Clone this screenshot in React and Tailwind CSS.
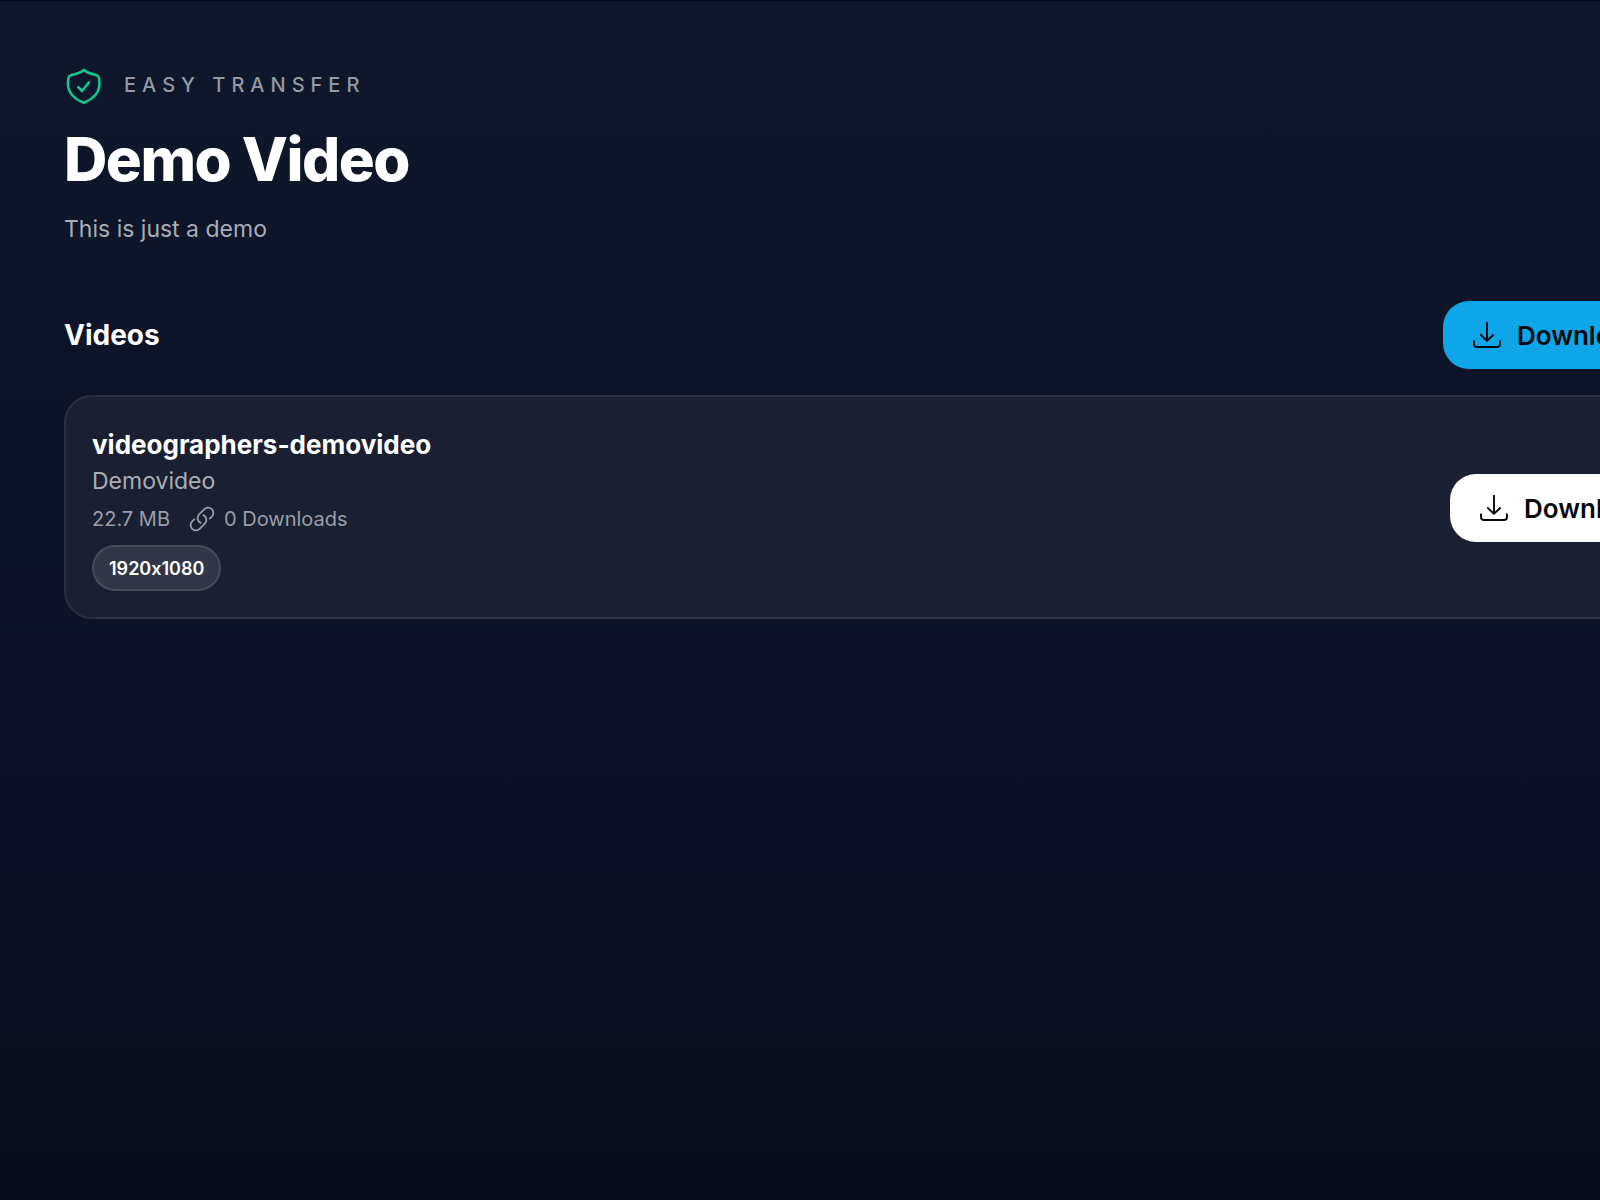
import React from "react";

function ShieldIcon() {
  return (
    <svg viewBox="0 0 40 40" className="size-10 shrink-0" fill="none" stroke="#10c78c" strokeWidth="2.6" strokeLinecap="round" strokeLinejoin="round" aria-hidden="true">
      <path d="M19.700 4.800 C16.500 8 12 9 7.300 10 Q4.900 10.700 4.400 13 C3.100 20 4 25.500 8 30 C11.300 33.700 15 36 19.700 37.800 C24.500 36 28.100 33.700 31.400 30 C35.400 25.500 36.300 20 35 13 Q34.500 10.700 32.100 10 C27.500 9 23 8 19.700 4.800 Z" />
      <path d="M14.300 22.200 L18 26 L25 17.300" />
    </svg>
  );
}

function LinkIcon() {
  return (
    <svg viewBox="0 0 24 24" className="size-7 shrink-0" fill="none" stroke="currentColor" strokeWidth="1.5" strokeLinecap="round" strokeLinejoin="round" aria-hidden="true">
      <path d="M13.19 8.688a4.5 4.5 0 0 1 1.242 7.244l-4.5 4.5a4.5 4.5 0 0 1-6.364-6.364l1.757-1.757m13.35-.622 1.757-1.757a4.5 4.5 0 0 0-6.364-6.364l-4.5 4.5a4.5 4.5 0 0 0 1.242 7.244" />
    </svg>
  );
}

function DownloadIcon() {
  return (
    <svg viewBox="0 0 28 28" className="size-7 shrink-0" fill="none" stroke="currentColor" strokeWidth="1.9" strokeLinejoin="round" aria-hidden="true">
      <path d="M14 1 V19.500 M7.300 13.500 L14 19.800 L20.700 13.500" />
      <path d="M1 19.500 V23 Q1 26 4 26 H24 Q27 26 27 23 V19.500" />
    </svg>
  );
}

function DownloadButton({ tone, children }) {
  const tones = { blue: "bg-[#0ea5e9]", white: "bg-white" };
  return (
    <button type="button" className={`flex h-[68px] shrink-0 items-center gap-4 rounded-[26px] px-[30px] text-[26px] font-semibold whitespace-nowrap text-[#06090f] ${tones[tone]}`}>
      <DownloadIcon />
      {children}
    </button>
  );
}

export default function App() {
  return (
    <div className="min-h-screen overflow-hidden border-t border-[#050a1e] bg-linear-to-b from-[#0f172a] via-[#0c1126] via-70% to-[#080c18] font-['Inter',sans-serif] text-white [font-feature-settings:'calt'_0]">
      <main className="-mr-[108px] py-16 pl-16">
        <header>
          <div className="flex items-center gap-5">
            <ShieldIcon />
            <p className="text-[20px] leading-10 font-medium tracking-[6px] text-[#9598a2] uppercase">Easy Transfer</p>
          </div>
          <h1 className="mt-[18px] text-[60px] leading-[72px] font-extrabold tracking-tight">Demo Video</h1>
          <p className="mt-4 text-[23px] leading-9 text-[#a9acb4]">This is just a demo</p>
        </header>

        <section className="mt-[54px]">
          <div className="flex items-center justify-between">
            <h2 className="text-[28px] leading-10 font-bold">Videos</h2>
            <DownloadButton tone="blue">Download all</DownloadButton>
          </div>

          <article className="mt-[26px] flex items-center justify-between rounded-[28px] border-2 border-[#2a3040] bg-[#1a2031] px-[26px] pt-7 pb-[26px]">
            <div>
              <h3 className="text-[26px] leading-10 font-bold">videographers-demovideo</h3>
              <p className="text-[23px] leading-8 text-[#a9acb4]">Demovideo</p>
              <div className="mt-1 flex items-center gap-[18px] text-[20px] leading-9 text-[#9a9da6]">
                <span>22.7 MB</span>
                <span className="flex items-center gap-2">
                  <LinkIcon />
                  0 Downloads
                </span>
              </div>
              <span className="mt-2 inline-flex h-[46px] items-center rounded-full border-2 border-[#464c5a] bg-[#313746] px-[15px] text-[18px] font-semibold">1920x1080</span>
            </div>
            <DownloadButton tone="white">Download</DownloadButton>
          </article>
        </section>
      </main>
    </div>
  );
}
